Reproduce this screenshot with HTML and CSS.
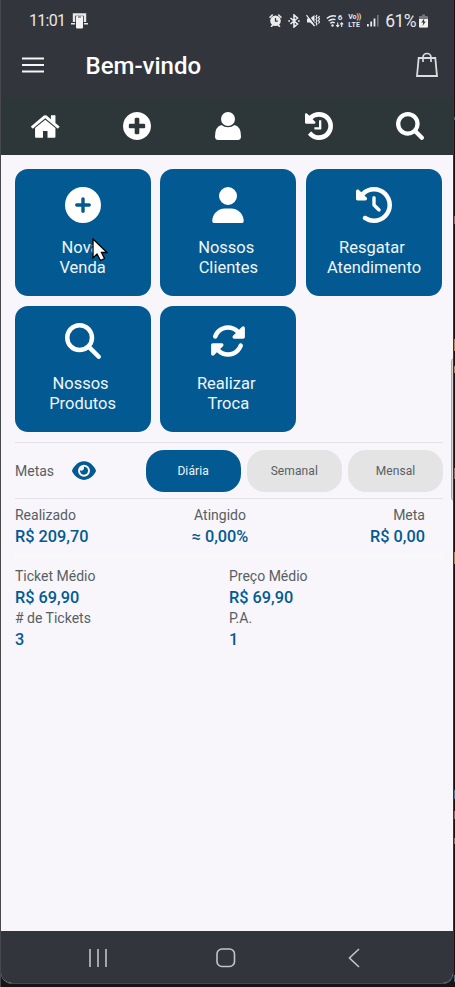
FILE: index.html
```html
<!DOCTYPE html>
<html lang="pt-BR">
<head>
<meta charset="utf-8">
<title>Bem-vindo</title>
<link rel="stylesheet" href="styles.css">
</head>
<body>
<div class="phone">
  <div class="status">
    <span class="clock">11:01</span>
    <svg class="cast" width="17" height="16" viewBox="0 0 17 16"><path d="M3 9V1.500h11V9" fill="none" stroke="#e8e8ea" stroke-width="2.400"/><path d="M0 10h4v1.400H0zM13 10h4v1.400h-4z" fill="#e8e8ea"/><rect x="5" y="3" width="7" height="12.500" rx="1" fill="#f4f4f5"/><path d="M7 4h3" stroke="#33353d"/></svg>
    <div class="status-icons">
      <svg width="13" height="13" viewBox="0 0 13 13"><path d="M1 3.200 3.300 1M12 3.200 9.700 1M2.500 12.500l1.500-2M10.500 12.500 9 10.500" stroke="#ececee" stroke-width="1.500" stroke-linecap="round"/><circle cx="6.500" cy="6.800" r="5.300" fill="#ececee"/><path d="M6.500 4v3.200h2.300" fill="none" stroke="#33353d" stroke-width="1.200"/></svg>
      <svg width="12" height="14" viewBox="0 0 12 14"><path d="m2.500 4 7 6L6 13V1l3.500 3-7 6M.3 7h1.700M10 7h1.700" fill="none" stroke="#ececee" stroke-width="1.600"/></svg>
      <svg width="14" height="13" viewBox="0 0 14 13"><path d="M1 4.500h3L8.500 1v11L4 8.500H1z" fill="#ececee"/><path d="m1.800.600 8 11" stroke="#33353d" stroke-width="1.200"/><path d="m.5 1.200 8 11M11 1l-1 1.500L11 4l-1 1.500L11 7l-1 1.500 1 1.500-1 1.500M13.500 2l-1 1.500 1 1.500-1 1.500 1 1.500-1 1.500" fill="none" stroke="#ececee" stroke-width="1.200"/></svg>
      <span class="wifi"><svg width="18" height="14" viewBox="0 0 18 14"><path d="M.8 4.500Q5 .6 10 2.200M2.600 7Q5.800 4.200 9.500 5.600M4.400 9.300Q6.500 7.600 8.700 8.800" fill="none" stroke="#ececee" stroke-width="1.500"/><circle cx="6.500" cy="11.500" r="1.200" fill="#ececee"/><path d="M11.700 8.500v4m-1.500-1.300 1.500 1.500 1.500-1.500M15.700 13V9m-1.500 1.300 1.500-1.500 1.500 1.500" fill="none" stroke="#ececee" stroke-width="1.100"/></svg><i>6</i></span>
      <span class="volte"><b>Vo))</b><b class="lte">LTE</b></span>
      <svg width="12" height="13" viewBox="0 0 12 13"><path d="M0 10h1.800v2.500H0zM3.300 7.500h1.800v5H3.300zM6.600 4.500h1.800v8H6.600z" fill="#ececee"/><path d="M10 1h1.600v11.500H10z" fill="#77787e"/></svg>
      <span class="percent">61%</span>
      <svg width="9" height="14" viewBox="0 0 9 14"><path d="M3 .5h3V2h2q1 0 1 1v9.500q0 1-1 1H1q-1 0-1-1V3q0-1 1-1h2z" fill="#77787e"/><path d="M0 5h9v7.500q0 1-1 1H1q-1 0-1-1z" fill="#f2f2f3"/><path d="M5.500 4 2.300 8.500h2L3.500 12l3.300-4.500h-2z" fill="#33353d"/></svg>
    </div>
  </div>
  <header class="appbar">
    <svg class="menu" width="22" height="16" viewBox="0 0 22 16"><path d="M0 1.500h22M0 8h22M0 14.500h22" stroke="#f6f6f7" stroke-width="2"/></svg>
    <h1>Bem-vindo</h1>
    <svg class="bag" width="22" height="25" viewBox="0 0 22 25"><path d="M2.700 6h16.600l1.700 18H1z" fill="none" stroke="#dcdcdf" stroke-width="1.800"/><path d="M7 10V5.500a4 4 0 0 1 8 0V10" fill="none" stroke="#dcdcdf" stroke-width="1.700"/></svg>
  </header>
  <nav class="tabs">
    <svg width="28.500" height="23" viewBox="26 253 1612 1283"><path d="M1408 992v480q0 26-19 45t-45 19H960v-384H704v384H320q-26 0-45-19t-19-45V992q0-1 .5-3t.5-3l575-474 575 474q1 2 1 6zm223-69l-62 74q-8 9-21 11h-3q-13 0-21-7L832 424 140 1001q-12 8-24 7-13-2-21-11l-62-74q-8-10-7-23.500T37 878l719-599q32-26 76-26t76 26l244 204V288q0-14 9-23t23-9h192q14 0 23 9t9 23v408l219 182q10 8 11 21.500t-7 23.500z"/></svg>
    <svg width="28" height="28" viewBox="0 128 1536 1536"><path d="M1216 960V832q0-26-19-45t-45-19H896V512q0-26-19-45t-45-19H704q-26 0-45 19t-19 45v256H384q-26 0-45 19t-19 45v128q0 26 19 45t45 19h256v256q0 26 19 45t45 19h128q26 0 45-19t19-45v-256h256q26 0 45-19t19-45zm320-64q0 209-103 385.500T1153.500 1561 768 1664t-385.500-103T103 1281.500 0 896t103-385.500T382.500 231 768 128t385.500 103T1433 510.500 1536 896z"/></svg>
    <svg width="26" height="28" viewBox="0 0 26 28"><circle cx="13" cy="7" r="7"/><path d="M6.500 13Q9.300 15.200 13 15.200T19.500 13Q26 14.500 26 24.500 26 28 22.500 28h-19Q0 28 0 24.500 0 14.500 6.500 13z"/></svg>
    <svg width="28" height="28" viewBox="0 128 1536 1536"><path d="M1536 896q0 156-61 298t-164 245-245 164-298 61q-172 0-327-72.500T177 1387q-7-10-6.500-22.500T179 1344l137-138q10-9 25-9 16 2 23 12 73 95 179 147t225 52q104 0 198.500-40.500T1130 1258t109.500-163.500T1280 896t-40.500-198.500T1130 534 966.500 424.500 768 384q-98 0-188 35.500T420 521l137 138q31 30 14 69-17 40-59 40H64q-26 0-45-19T0 704V256q0-42 40-59 39-17 69 14l130 129q107-101 244.500-156.500T768 128q156 0 298 61t245 164 164 245 61 298zM896 608v448q0 14-9 23t-23 9H544q-14 0-23-9t-9-23v-64q0-14 9-23t23-9h224V608q0-14 9-23t23-9h64q14 0 23 9t9 23z"/></svg>
    <svg width="28" height="28" viewBox="0 128 1664 1664"><path d="M1152 832q0-185-131.500-316.500T704 384 387.500 515.500 256 832t131.500 316.500T704 1280t316.500-131.500T1152 832zm512 832q0 52-38 90t-90 38q-54 0-90-38l-343-342q-179 124-399 124-143 0-273.500-55.500t-225-150-150-225T0 832t55.500-273.500 150-225 225-150T704 128t273.500 55.500 225 150 150 225T1408 832q0 220-124 399l343 343q37 37 37 90z"/></svg>
  </nav>
  <main>
    <div class="tiles">
      <div class="tile"><svg viewBox="0 0 512 512"><path d="M256 512A256 256 0 1 0 256 0a256 256 0 1 0 0 512zM232 344V280H168c-13.300 0-24-10.700-24-24s10.700-24 24-24h64V168c0-13.300 10.700-24 24-24s24 10.700 24 24v64h64c13.300 0 24 10.700 24 24s-10.700 24-24 24H280v64c0 13.300-10.700 24-24 24s-24-10.700-24-24z"/></svg><span>Nova&nbsp;<br>Venda</span>
        <svg class="cursor" viewBox="0 0 16 24"><path d="M1 1v19l4-4 3.500 6.500 4-2L9.500 14.500H15z" fill="#fff" stroke="#000" stroke-width="1.300"/></svg></div>
      <div class="tile"><svg viewBox="-32 0 512 512"><path d="M224 256A128 128 0 1 0 224 0a128 128 0 1 0 0 256zm-45.700 48C79.800 304 0 383.800 0 482.300C0 498.700 13.300 512 29.700 512H418.300c16.400 0 29.700-13.300 29.700-29.700C448 383.800 368.200 304 269.700 304H178.300z"/></svg><span>Nossos&nbsp;<br>Clientes</span></div>
      <div class="tile"><svg viewBox="0 0 512 512"><path d="M75 75L41 41C25.900 25.900 0 36.600 0 57.900V168c0 13.300 10.700 24 24 24H134.100c21.400 0 32.100-25.900 17-41l-30.800-30.800C155 85.500 203 64 256 64c106 0 192 86 192 192s-86 192-192 192c-40.800 0-78.600-12.700-109.700-34.400c-14.500-10.100-34.400-6.600-44.600 7.900s-6.600 34.400 7.900 44.600C151.200 495 201.700 512 256 512c141.400 0 256-114.600 256-256S397.400 0 256 0C185.300 0 121.300 28.700 75 75zm181 53c-13.300 0-24 10.700-24 24V256c0 6.400 2.500 12.500 7 17l72 72c9.400 9.400 24.600 9.400 33.900 0s9.400-24.600 0-33.900l-65-65V152c0-13.300-10.700-24-24-24z"/></svg><span>Resgatar&nbsp;<br>Atendimento</span></div>
      <div class="tile"><svg viewBox="0 0 512 512"><path d="M416 208c0 45.900-14.900 88.300-40 122.700L502.600 457.400c12.500 12.500 12.500 32.800 0 45.300s-32.800 12.500-45.300 0L330.700 376c-34.400 25.200-76.800 40-122.700 40C93.100 416 0 322.900 0 208S93.100 0 208 0S416 93.100 416 208zM208 352a144 144 0 1 0 0-288 144 144 0 1 0 0 288z"/></svg><span>Nossos&nbsp;<br>Produtos</span></div>
      <div class="tile"><svg viewBox="0 0 512 512"><path d="M142.900 142.900c62.200-62.200 162.700-62.500 225.300-1L327 183c-6.900 6.900-8.900 17.200-5.200 26.200s12.500 14.800 22.200 14.800H472c13.300 0 24-10.700 24-24V72c0-9.700-5.800-18.500-14.800-22.200s-19.300-1.700-26.200 5.200L413.400 96.600c-87.600-86.500-228.700-86.200-315.800 1C73.200 122 55.600 150.700 44.800 181.400c-5.900 16.700 2.900 34.900 19.500 40.800s34.900-2.900 40.800-19.500c7.700-21.800 20.200-42.300 37.800-59.800zM16 312V440c0 9.700 5.800 18.500 14.800 22.200s19.300 1.700 26.200-5.200l41.600-41.600c87.600 86.500 228.700 86.200 315.800-1c24.400-24.400 42.100-53.100 52.900-83.700c5.900-16.700-2.900-34.900-19.500-40.800s-34.900 2.900-40.800 19.500c-7.700 21.800-20.200 42.300-37.800 59.800c-62.200 62.200-162.700 62.500-225.300 1L185 329c6.900-6.900 8.900-17.200 5.200-26.200s-12.500-14.800-22.200-14.800H40c-13.300 0-24 10.700-24 24z"/></svg><span>Realizar&nbsp;<br>Troca</span></div>
    </div>
    <div class="goals">
      <span class="label">Metas</span>
      <svg width="24" height="21.300" viewBox="0 0 576 512"><path fill="#035a92" d="M288 32c-80.800 0-145.500 36.800-192.600 80.600C48.600 156 17.300 208 2.500 243.700c-3.300 7.900-3.300 16.700 0 24.600C17.300 304 48.600 356 95.400 399.400C142.500 443.200 207.200 480 288 480s145.500-36.800 192.600-80.600c46.800-43.500 78.100-95.400 93-131.100c3.300-7.900 3.300-16.700 0-24.600c-14.900-35.700-46.200-87.700-93-131.100C433.500 68.800 368.800 32 288 32zM144 256a144 144 0 1 1 288 0 144 144 0 1 1-288 0zm144-64c0 35.300-28.700 64-64 64c-7.100 0-13.900-1.200-20.300-3.300c-5.500-1.800-11.900 1.600-11.700 7.400c.3 6.900 1.300 13.800 3.200 20.700c13.700 51.200 66.400 81.600 117.600 67.900s81.600-66.400 67.900-117.600c-11.100-41.500-47.800-69.400-88.600-71.100c-5.800-.2-9.200 6.100-7.400 11.700c2.100 6.400 3.300 13.200 3.300 20.300z"/></svg>
      <div class="pills"><span class="pill active">Diária</span><span class="pill">Semanal</span><span class="pill">Mensal</span></div>
    </div>
    <div class="totals">
      <div>Realizado<strong>R$ 209,70</strong></div>
      <div>Atingido<strong>≈ 0,00%</strong></div>
      <div>Meta<strong>R$ 0,00</strong></div>
    </div>
    <div class="divider"></div>
    <div class="details">
      <div>Ticket Médio<strong>R$ 69,90</strong></div>
      <div>Preço Médio<strong>R$ 69,90</strong></div>
      <div># de Tickets<strong>3</strong></div>
      <div>P.A.<strong>1</strong></div>
    </div>
  </main>
  <footer class="system">
    <svg width="18" height="20" viewBox="0 0 18 20"><path d="M1 1v18M9 1v18M17 1v18"/></svg>
    <svg width="20" height="20" viewBox="0 0 20 20"><rect x="1" y="1" width="17.500" height="17.500" rx="5"/></svg>
    <svg width="12" height="20" viewBox="0 0 12 20"><path d="M11 1 1.500 10 11 19"/></svg>
  </footer>
  <div class="edge-handle"></div>
</div>
</body>
</html>
```
FILE: styles.css
```css
* { box-sizing: border-box; }

html { background: #1a1a1b; }

body {
  margin: 0;
  height: 987px;
  padding-left: 1px;
  overflow: hidden;
  font-family: Roboto, "Liberation Sans", sans-serif;
  background:
    linear-gradient(#2b6f9e, #2b6f9e) 454px 117px / 1px 3px no-repeat,
    linear-gradient(#8a6a5a, #8a6a5a) 454px 216px / 1px 8px no-repeat,
    linear-gradient(#a88a3e, #a88a3e) 454px 339px / 1px 12px no-repeat,
    linear-gradient(#a88a3e, #a88a3e) 454px 366px / 1px 7px no-repeat,
    linear-gradient(#8a6a5a, #8a6a5a) 454px 468px / 1px 11px no-repeat,
    linear-gradient(#a88a3e, #a88a3e) 454px 552px / 1px 12px no-repeat,
    linear-gradient(#2b7fae, #2b7fae) 454px 790px / 1px 9px no-repeat,
    linear-gradient(#8a6a5a, #8a6a5a) 454px 811px / 1px 8px no-repeat,
    linear-gradient(#8a6a5a, #8a6a5a) 454px 838px / 1px 6px no-repeat,
    linear-gradient(#2b7fae, #2b7fae) 454px 975px / 1px 7px no-repeat,
    linear-gradient(90deg, #47484a 1px, #151516 1px);
}

.phone {
  position: relative;
  display: flex;
  flex-direction: column;
  width: 453px;
  height: 984px;
  border-right: 1px solid #343538;
  border-bottom: 1px solid #48494c;
  border-radius: 0 0 11px 11px;
  overflow: hidden;
  background: #f8f6fa;
}

.status {
  display: flex;
  align-items: center;
  height: 41px;
  padding: 0 24px 0 28px;
  background: #33353d;
  color: #e8e8ea;
}
.clock { width: 35px; font-size: 16px; letter-spacing: -.7px; }
.cast { margin-left: 7px; }
.status-icons { display: flex; align-items: center; gap: 6px; margin-left: auto; }
.status-icons svg { flex: none; }
.wifi { position: relative; display: flex; }
.wifi i { position: absolute; right: 2px; top: -1px; font: 700 8px/9px Roboto, sans-serif; }
.volte { display: flex; flex-direction: column; width: 13px; margin-left: -2px; font-size: 7px; line-height: 8px; }
.volte b { white-space: nowrap; font-weight: 700; letter-spacing: -.1px; }
.volte .lte { letter-spacing: .2px; }
.percent { margin-right: -1px; font-size: 17.500px; letter-spacing: -.6px; }
.percent + svg { margin: 0 1px 0 -2px; }

.appbar {
  display: flex;
  align-items: center;
  height: 57px;
  padding: 0 15px 9px 21px;
  background: #33353d;
  color: #fff;
}
.appbar h1 { margin: 1px 0 0 41.500px; font-size: 24px; font-weight: 500; line-height: 30px; }
.appbar .bag { margin: -1px 0 0 auto; }

.tabs {
  display: grid;
  grid-template-columns: repeat(5, 91px);
  place-items: center;
  height: 57px;
  padding-bottom: 1px;
  margin-left: -1px;
  background: #2d3739;
  fill: #fff;
}

main { flex: 1; padding: 14px 9px 0 13.600px; }

.tiles { display: grid; grid-template-columns: repeat(3, 136px); gap: 10px 9.700px; }
.tile {
  position: relative;
  display: flex;
  flex-direction: column;
  align-items: center;
  height: 126.500px;
  padding-top: 18px;
  border-radius: 13px;
  background: #035a92;
  color: #eef5fa;
  font-size: 16.500px;
  line-height: 20px;
  text-align: center;
}
.tile > svg { width: 36px; height: 36px; fill: #fff; }
.tile span { margin-top: 15px; }
.tile:nth-child(n+4) { padding-top: 17.500px; }
.tile .cursor { position: absolute; left: 77.400px; top: 69px; width: 16px; height: 24px; }

.goals {
  display: flex;
  align-items: center;
  width: 428.400px;
  height: 57px;
  margin-top: 10px;
  border-top: 1px solid #e2e1e4;
  border-bottom: 1px solid #e2e1e4;
  color: #566064;
}
.label { width: 57px; padding: 1px 0 0 .4px; font-size: 14px; }
.goals > svg { margin-top: 1px; }
.pills { display: flex; gap: 6.200px; margin-left: auto; }
.pill {
  width: 95px;
  height: 42px;
  border-radius: 18px;
  background: #e4e4e4;
  font-size: 12px;
  line-height: 42px;
  letter-spacing: .1px;
  text-align: center;
}
.pill.active { background: #035a92; color: #eef5fa; }

.totals, .details { margin-left: .400px; color: #566064; font-size: 14px; line-height: 21px; }
.totals { display: grid; grid-template-columns: repeat(3, 1fr); width: 410px; margin-top: 6px; }
.totals div:nth-child(2) { text-align: center; }
.totals div:nth-child(3) { text-align: right; }
strong { display: block; color: #035a92; font-size: 16.300px; font-weight: 500; }
.divider { width: 428px; height: 6px; margin: 6px 0 7px; background: #f9f9f9; }
.details { display: grid; grid-template-columns: 214px 214px; }

.system {
  display: flex;
  justify-content: space-between;
  align-items: center;
  height: 52px;
  padding: 1px 93px 0 88px;
  background: #33353d;
}
.system svg { fill: none; stroke: #c4c4c7; stroke-width: 1.600; }
.system svg:nth-child(2) { margin-right: 4px; }

.edge-handle {
  position: absolute;
  right: -5px;
  top: 358px;
  width: 7px;
  height: 143px;
  border: 1px solid #a9aaad;
  border-radius: 4px;
  background: #d4d4d6;
}
```
